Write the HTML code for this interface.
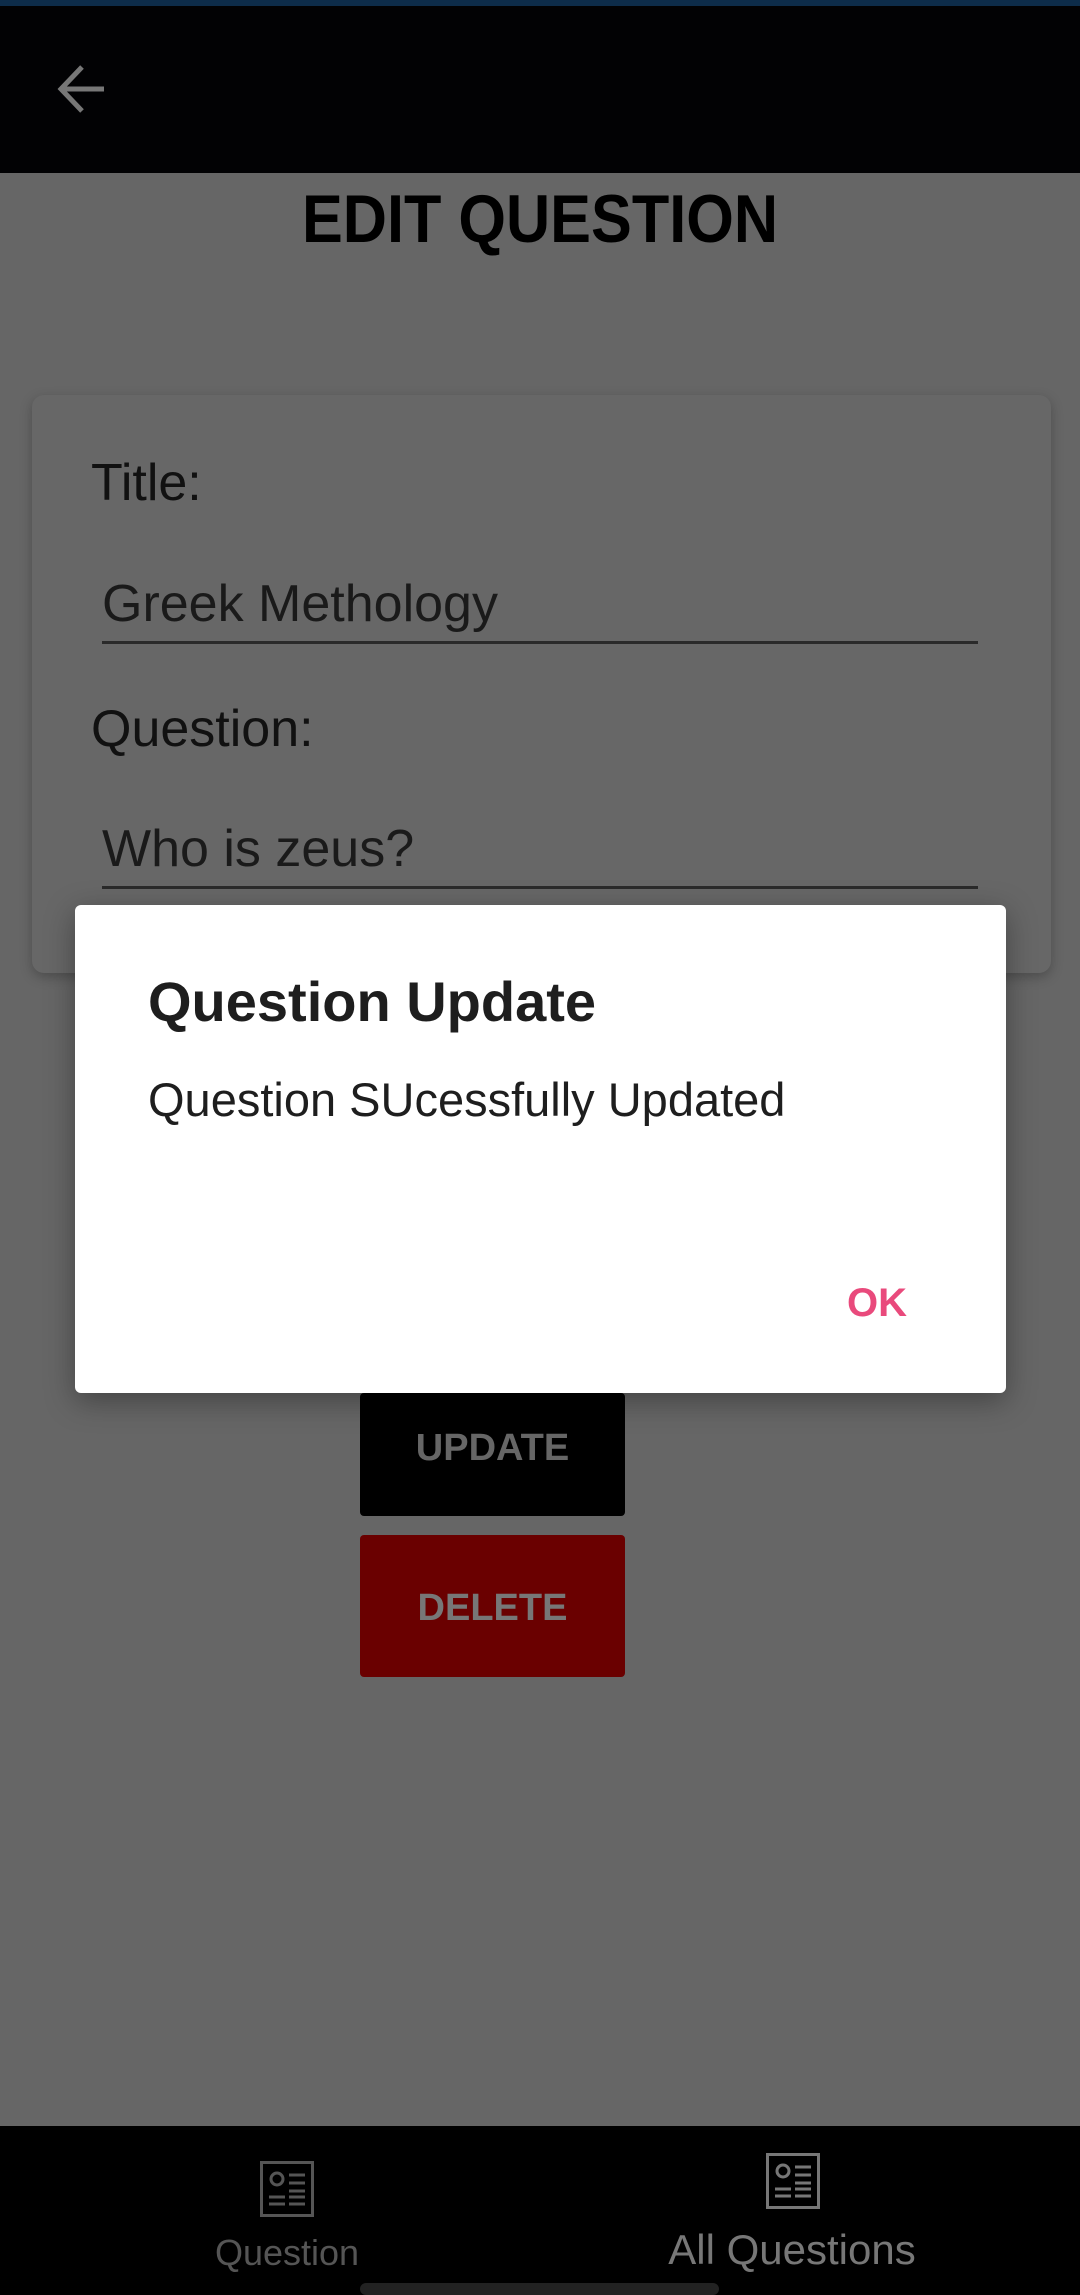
<!DOCTYPE html>
<html><head><meta charset="utf-8"><style>
*{margin:0;padding:0;box-sizing:border-box}
body{width:1080px;height:2295px;background:#666;position:relative;overflow:hidden;font-family:"Liberation Sans",sans-serif}
.abs{position:absolute}
</style></head><body>
<div class="abs" style="left:0;top:0;width:1080px;height:6px;background:#0d2c4a"></div>
<div class="abs" style="left:0;top:6px;width:1080px;height:167px;background:#020204"></div>
<svg class="abs" style="left:56px;top:62px" width="52" height="54" viewBox="0 0 52 54"><path d="M48 27H6M26 5L5 27l21 22" stroke="#777" stroke-width="5" fill="none"/></svg>
<div class="abs" style="left:0;top:180px;width:1080px;text-align:center;font-size:68px;font-weight:bold;color:#000;transform:scaleX(0.9)">EDIT QUESTION</div>
<div class="abs" style="left:32px;top:395px;width:1019px;height:578px;background:#676767;border-radius:12px;box-shadow:0 4px 12px rgba(0,0,0,0.25)"></div>
<div class="abs" style="left:91px;top:453px;font-size:52px;color:#111">Title:</div>
<div class="abs" style="left:102px;top:574px;font-size:52px;color:#1a1a1a">Greek Methology</div>
<div class="abs" style="left:102px;top:641px;width:876px;height:3px;background:#2a2a2a"></div>
<div class="abs" style="left:91px;top:699px;font-size:52px;color:#111">Question:</div>
<div class="abs" style="left:102px;top:819px;font-size:52px;color:#1a1a1a">Who is zeus?</div>
<div class="abs" style="left:102px;top:886px;width:876px;height:3px;background:#2a2a2a"></div>
<div class="abs" style="left:360px;top:1393px;width:265px;height:123px;background:#000;border-radius:4px;color:#666;font-size:38px;font-weight:bold;text-align:center;line-height:110px">UPDATE</div>
<div class="abs" style="left:360px;top:1535px;width:265px;height:142px;background:#6a0000;border-radius:4px;color:#777;font-size:38px;font-weight:bold;text-align:center;line-height:146px">DELETE</div>
<div class="abs" style="left:75px;top:905px;width:931px;height:488px;background:#fff;border-radius:6px;box-shadow:0 8px 30px rgba(0,0,0,0.35)"></div>
<div class="abs" style="left:148px;top:969px;font-size:56px;font-weight:bold;color:#1e1e1e">Question Update</div>
<div class="abs" style="left:148px;top:1072px;font-size:47px;color:#1e1e1e">Question SUcessfully Updated</div>
<div class="abs" style="left:847px;top:1281px;font-size:40px;font-weight:bold;color:#e94a7c">OK</div>
<div class="abs" style="left:0;top:2126px;width:1080px;height:169px;background:#000"></div>
<svg class="abs" style="left:260px;top:2161px" width="54" height="56" viewBox="0 0 54 56"><rect x="1.5" y="1.5" width="51" height="53" fill="none" stroke="#555" stroke-width="3"/><circle cx="17" cy="18" r="6" fill="none" stroke="#555" stroke-width="3"/><g stroke="#555" stroke-width="3"><path d="M29 14h16M29 22h16M29 30h16M9 36h16M29 36h16M9 43h16M29 43h16"/></g></svg>
<svg class="abs" style="left:766px;top:2153px" width="54" height="56" viewBox="0 0 54 56"><rect x="1.5" y="1.5" width="51" height="53" fill="none" stroke="#777" stroke-width="3"/><circle cx="17" cy="18" r="6" fill="none" stroke="#777" stroke-width="3"/><g stroke="#777" stroke-width="3"><path d="M29 14h16M29 22h16M29 30h16M9 36h16M29 36h16M9 43h16M29 43h16"/></g></svg>
<div class="abs" style="left:187px;top:2232px;width:200px;text-align:center;font-size:36px;color:#555">Question</div>
<div class="abs" style="left:642px;top:2226px;width:300px;text-align:center;font-size:42px;color:#777">All Questions</div>
<div class="abs" style="left:360px;top:2283px;width:359px;height:12px;background:#222;border-radius:6px"></div>
</body></html>
